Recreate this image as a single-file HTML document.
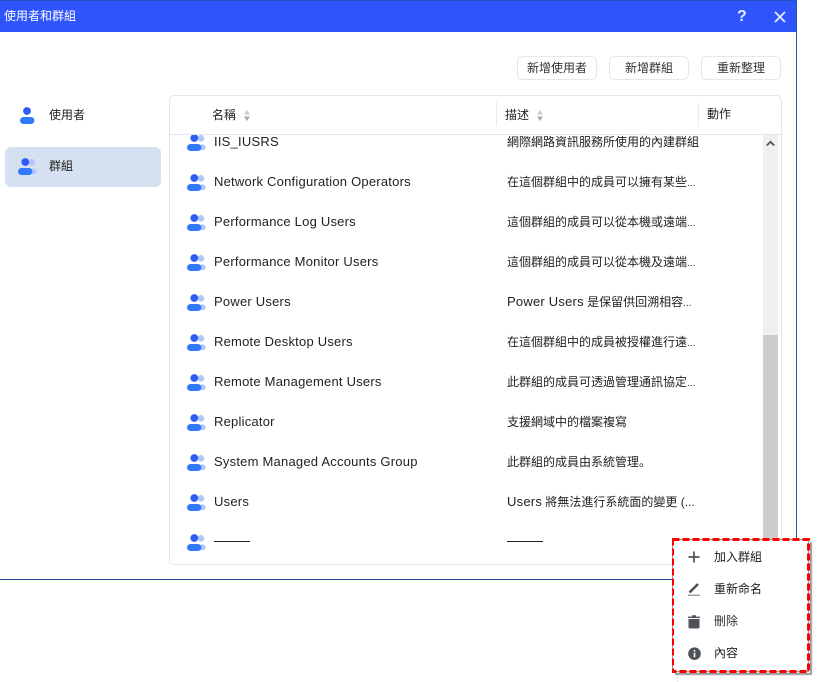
<!DOCTYPE html>
<html><head><meta charset="utf-8"><style>
*{box-sizing:border-box}
html,body{margin:0;padding:0;width:822px;height:682px;overflow:hidden;background:#fff;font-family:"Liberation Sans","Noto Sans CJK SC",sans-serif;font-size:12px;color:#222}
.a{position:absolute;white-space:nowrap;line-height:18px}
.btn{position:absolute;top:56px;height:24px;border:1px solid #e3e7ee;border-radius:6px;text-align:center;line-height:22px;color:#333;font-size:12px}
.n{left:214px;letter-spacing:.22px;font-size:13px}
.d{left:507px}
.d span{font-size:13px;letter-spacing:.22px}
.d i{font-style:normal;font-size:10px}
svg{position:absolute}
</style></head><body>
<svg width="0" height="0" style="left:0;top:0"><defs>
<g id="g"><circle cx="14" cy="4.3" r="3.3" fill="#b3c6fb"/><rect x="12" y="10.5" width="6.8" height="5.6" rx="2.8" fill="#b3c6fb"/><circle cx="7.3" cy="4" r="3.9" fill="#2f5cf6"/><rect x="0" y="10" width="14.4" height="7" rx="3.5" fill="#2e7bfb"/></g>
</defs></svg>
<div style="position:absolute;left:0;top:0;width:797px;height:580px;border-right:1px solid #1a55b0;border-bottom:1px solid #1d4f9c;background:#fff"></div>
<div style="position:absolute;left:0;top:0;width:796px;height:32px;background:#2f54fb;border-top:1px solid #2450c0"></div>
<div class="a" style="left:4px;top:7px;color:#fff">使用者和群組</div>
<div class="a" style="left:737px;top:8px;color:#e8edff;font-size:16px;font-weight:bold">?</div>
<svg style="left:774px;top:11px" width="12" height="12"><path d="M1 1L11 11M11 1L1 11" stroke="#e8edff" stroke-width="1.7" fill="none"/></svg>

<div class="btn" style="left:517px;width:80px">新增使用者</div>
<div class="btn" style="left:609px;width:80px">新增群組</div>
<div class="btn" style="left:701px;width:80px">重新整理</div>

<svg style="left:20px;top:107px" width="16" height="18"><circle cx="7" cy="4" r="3.9" fill="#2f5cf6"/><rect x="0" y="10" width="14.4" height="7" rx="3.5" fill="#2e7bfb"/></svg>
<div class="a" style="left:49px;top:106px">使用者</div>
<div style="position:absolute;left:5px;top:147px;width:156px;height:40px;background:#d5e0f0;border-radius:6px"></div>
<svg style="left:18px;top:158px" width="20" height="18"><use href="#g"/></svg>
<div class="a" style="left:49px;top:157px">群組</div>

<div style="position:absolute;left:169px;top:95px;width:613px;height:470px;border:1px solid #dfe7f3;border-radius:5px"></div>
<div style="position:absolute;left:170px;top:134px;width:611px;height:1px;background:#dfe7f3"></div>
<div style="position:absolute;left:496px;top:102px;width:1px;height:24px;background:#e6ebf3"></div>
<div style="position:absolute;left:698px;top:102px;width:1px;height:24px;background:#e6ebf3"></div>
<div class="a" style="left:212px;top:106px">名稱</div>
<svg style="left:244px;top:110px" width="6" height="11"><path d="M3 0L6 4.5H0z" fill="#ccc"/><path d="M3 11L0 6.5h6z" fill="#aaa"/></svg>
<div class="a" style="left:505px;top:106px">描述</div>
<svg style="left:537px;top:110px" width="6" height="11"><path d="M3 0L6 4.5H0z" fill="#ccc"/><path d="M3 11L0 6.5h6z" fill="#aaa"/></svg>
<div class="a" style="left:707px;top:105px">動作</div>

<div style="position:absolute;left:763px;top:135px;width:15px;height:405px;background:#f0f0f0"></div>
<div style="position:absolute;left:763px;top:335px;width:15px;height:205px;background:#cdcdcd"></div>
<svg style="left:766px;top:140px" width="9" height="7"><path d="M.8 5.5L4.5 1.8L8.2 5.5" stroke="#555" stroke-width="1.8" fill="none"/></svg>

<svg style="left:187px;top:135px" width="20" height="17" viewBox="0 1 20 17"><use href="#g"/></svg>
<div class="a n" style="top:133px">IIS_IUSRS</div><div class="a d" style="top:133px">網際網路資訊服務所使用的內建群組</div>
<svg style="left:187px;top:174px" width="20" height="18"><use href="#g"/></svg>
<div class="a n" style="top:173px">Network Configuration Operators</div><div class="a d" style="top:173px">在這個群組中的成員可以擁有某些<i>...</i></div>
<svg style="left:187px;top:214px" width="20" height="18"><use href="#g"/></svg>
<div class="a n" style="top:213px">Performance Log Users</div><div class="a d" style="top:213px">這個群組的成員可以從本機或遠端<i>...</i></div>
<svg style="left:187px;top:254px" width="20" height="18"><use href="#g"/></svg>
<div class="a n" style="top:253px">Performance Monitor Users</div><div class="a d" style="top:253px">這個群組的成員可以從本機及遠端<i>...</i></div>
<svg style="left:187px;top:294px" width="20" height="18"><use href="#g"/></svg>
<div class="a n" style="top:293px">Power Users</div><div class="a d" style="top:293px"><span>Power Users</span> 是保留供回溯相容<i>...</i></div>
<svg style="left:187px;top:334px" width="20" height="18"><use href="#g"/></svg>
<div class="a n" style="top:333px">Remote Desktop Users</div><div class="a d" style="top:333px">在這個群組中的成員被授權進行遠<i>...</i></div>
<svg style="left:187px;top:374px" width="20" height="18"><use href="#g"/></svg>
<div class="a n" style="top:373px">Remote Management Users</div><div class="a d" style="top:373px">此群組的成員可透過管理通訊協定<i>...</i></div>
<svg style="left:187px;top:414px" width="20" height="18"><use href="#g"/></svg>
<div class="a n" style="top:413px">Replicator</div><div class="a d" style="top:413px">支援網域中的檔案複寫</div>
<svg style="left:187px;top:454px" width="20" height="18"><use href="#g"/></svg>
<div class="a n" style="top:453px">System Managed Accounts Group</div><div class="a d" style="top:453px">此群組的成員由系統管理。</div>
<svg style="left:187px;top:494px" width="20" height="18"><use href="#g"/></svg>
<div class="a n" style="top:493px">Users</div><div class="a d" style="top:493px"><span>Users</span> 將無法進行系統面的變更 (...</div>
<svg style="left:187px;top:534px" width="20" height="18"><use href="#g"/></svg>
<div style="position:absolute;left:214px;top:541px;width:36px;height:1px;background:#222"></div>
<div style="position:absolute;left:507px;top:541px;width:36px;height:1px;background:#222"></div>

<div style="position:absolute;left:677px;top:672px;width:1px;height:10px;background:#e3eaf5"></div>
<div style="position:absolute;left:673px;top:540px;width:137px;height:133px;background:#fff;box-shadow:2px 2px 1px #999"></div>
<svg style="left:672px;top:538px" width="140" height="136"><rect x=".5" y="1.5" width="136" height="132" fill="none" stroke="#999" stroke-width="1"/><rect x=".5" y="1.5" width="136" height="132" fill="none" stroke="#f00" stroke-width="3" stroke-dasharray="7 3"/></svg>
<svg style="left:688px;top:551px" width="12" height="12"><path d="M6 .5V11.5M.5 6H11.5" stroke="#50525a" stroke-width="1.7" fill="none"/></svg>
<svg style="left:688px;top:582px" width="13" height="15"><path d="M1.5 10.5L10 2" stroke="#50525a" stroke-width="2.6" fill="none"/><path d="M0 13.2H12" stroke="#70727a" stroke-width="1" fill="none"/></svg>
<svg style="left:688px;top:615px" width="12" height="14"><path d="M0 1.6H12V3H0zM4 .2H8V1.6H4zM.5 4H11.5V12a1.5 1.5 0 0 1-1.5 1.5H2A1.5 1.5 0 0 1 .5 12z" fill="#50525a"/></svg>
<svg style="left:688px;top:647px" width="13" height="13"><circle cx="6.5" cy="6.7" r="6.3" fill="#50525a"/><path d="M5.7 5.6H7.3V10.3H5.7zM5.7 2.9H7.3V4.5H5.7z" fill="#fff"/></svg>
<div class="a" style="left:714px;top:548px">加入群組</div>
<div class="a" style="left:714px;top:580px">重新命名</div>
<div class="a" style="left:714px;top:612px;color:#333">刪除</div>
<div class="a" style="left:714px;top:644px">內容</div>
</body></html>
